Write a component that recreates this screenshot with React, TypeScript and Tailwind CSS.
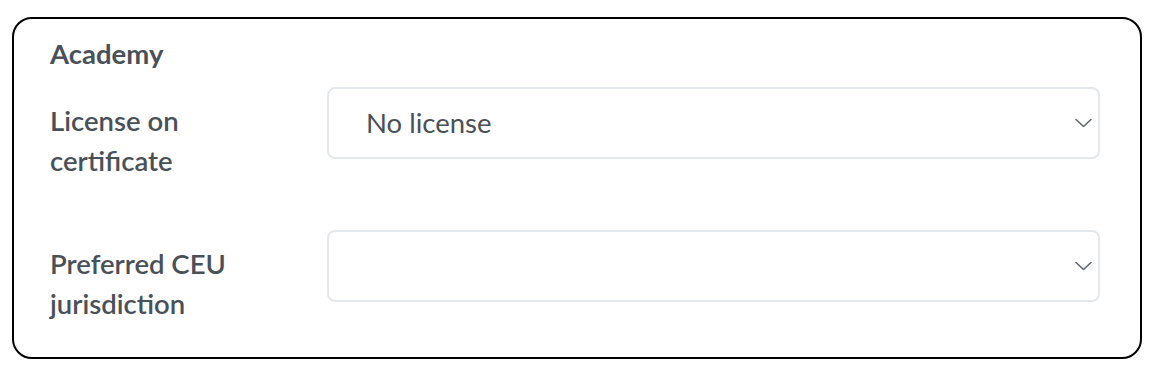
import { ChangeEvent, useState } from 'react';

const font = { fontFamily: 'Lato, "Noto Sans", sans-serif' };

function Chevron() {
  return (
    <svg width="17" height="9" viewBox="0 0 17 9" fill="none" className="pointer-events-none absolute right-[8px] top-1/2 -translate-y-1/2">
      <path d="M1 1L8.5 8L16 1" stroke="#5f656c" strokeWidth="1.6" strokeLinecap="round" strokeLinejoin="round" />
    </svg>
  );
}

function SelectRow({ label, value, options, onChange }: { label: string[]; value: string; options: string[]; onChange: (v: string) => void }) {
  return (
    <div className="flex items-start">
      <div className="w-[277px] shrink-0 pt-[14px] text-[27.5px] leading-[40px] font-semibold text-[#4a5057]">
        {label.map((l) => (
          <div key={l}>{l}</div>
        ))}
      </div>
      <div className="relative flex-1">
        <select
          value={value}
          onChange={(e: ChangeEvent<HTMLSelectElement>) => onChange(e.target.value)}
          className="h-[72px] w-full appearance-none rounded-[8px] border-2 border-[#e4e7eb] bg-white pl-[37px] pr-10 text-[27.5px] text-[#4a5057] outline-none"
          style={font}
        >
          {options.map((o) => (
            <option key={o} value={o}>{o}</option>
          ))}
        </select>
        <Chevron />
      </div>
    </div>
  );
}

export default function App() {
  const [license, setLicense] = useState('No license');
  const [ceu, setCeu] = useState('');

  return (
    <div className="h-[372px] w-[1156px] bg-white pl-[12px] pt-[17px]" style={font}>
      <div className="h-[342px] w-[1130px] rounded-[20px] border-[2.5px] border-black pl-[36px] pr-[40px] pt-[15px]">
        <h2 className="text-[27.5px] leading-[40px] font-bold text-[#4a5057]">Academy</h2>
        <div className="mt-[13px] flex flex-col gap-[49px]">
          <SelectRow label={['License on', 'certificate']} value={license} options={['No license', 'Licensed']} onChange={setLicense} />
          <SelectRow label={['Preferred CEU', 'jurisdiction']} value={ceu} options={['', 'California', 'New York']} onChange={setCeu} />
        </div>
      </div>
    </div>
  );
}
